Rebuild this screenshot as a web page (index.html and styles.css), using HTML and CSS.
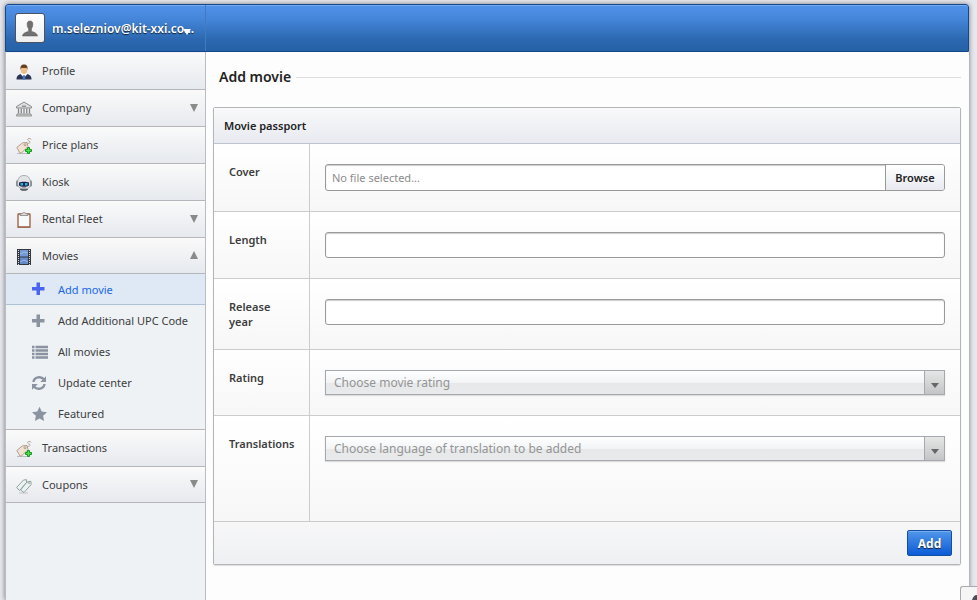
FILE: index.html
```html
<!DOCTYPE html>
<html lang="en">
<head>
<meta charset="utf-8">
<meta name="viewport" content="width=device-width, initial-scale=1">
<title>Add movie</title>
<link rel="stylesheet" href="styles.css">
</head>
<body>
<svg class="sprites" aria-hidden="true">
  <defs>
    <symbol id="tag" viewBox="0 0 16 16">
      <path d="M1 15.500h10" stroke="#b9bcc0" stroke-width="1"/>
      <path d="M10.500 5.500c4.500 0 4-2 2.500-2.500s-2-2.500 0-2.500 2 .5 2 1" fill="none" stroke="#b5a697" stroke-width="1"/>
      <path d="M.8 9.500L6.500 4.800l4.500-.3 1 4-6.500 6.500H4z" fill="#f1e2d3" stroke="#ab9683" stroke-width=".9"/>
      <circle cx="9" cy="6.800" r="1" fill="#fff" stroke="#8f7763" stroke-width=".7"/>
      <path d="M11.500 9.500h2v2h2v2h-2v2h-2v-2h-2v-2h2z" fill="#4fe04a" stroke="#129a20" stroke-width="1"/>
    </symbol>
    <symbol id="plus" viewBox="0 0 16 16">
      <path d="M4.500 1.500h3.500V6h4.500v3.500H8V14H4.500V9.500H0V6h4.500z" fill="currentColor"/>
    </symbol>
  </defs>
</svg>
<div class="shell">
  <header class="topbar">
    <button class="user" type="button">
      <span class="avatar">
        <svg width="18" height="18" viewBox="0 0 18 18"><path d="M9 2c2.300 0 3 1.400 2.800 3.800-.1 2-.8 3-1.400 4V12c.8 1.200 5.600 1.200 6.100 5h-15c.5-3.800 5.300-3.800 6.100-5V9.800c-.6-1-1.300-2-1.400-4C6 3.400 6.700 2 9 2z" fill="#707070" stroke="#555" stroke-width=".5"/></svg>
      </span>
      <span class="email">m.selezniov@kit-xxi.co...</span>
      <span class="caret"></span>
    </button>
  </header>
  <div class="columns">
    <nav class="sidebar">
      <a class="item" href="#">
        <svg class="icon" viewBox="0 0 16 16"><path d="M.5 15.500c0-4 2-5 5-5.500h5c3 .5 5 1.500 5 5.500z" fill="#2c3353"/><path d="M5 10.500L8 14l3-3.500L10 8H6z" fill="#fff"/><path d="M7.300 11h1.400l.8 4.500h-3z" fill="#3f77c4"/><ellipse cx="8" cy="6" rx="3.200" ry="4" fill="#f0bd8c"/><path d="M4.600 6C4 2 5.300.5 8 .5S12 2 11.400 6l-.8-2.300c-1.500.6-3.600.5-5.200 0z" fill="#67401f"/></svg>
        <span>Profile</span>
      </a>
      <a class="item" href="#">
        <svg class="icon" viewBox="0 0 16 16"><path d="M.5 5.500L8 1l7.500 4.500V7H.5z" fill="#ddd" stroke="#858585" stroke-width=".9"/><path d="M6 5.200h4" stroke="#777"/><path d="M2.500 7.500v5m2.750-5v5m5.500-5v5m2.750-5v5M8 7.500v5" stroke="#858585" stroke-width="1.300"/><path d="M1 13h14l.6 2H.4z" fill="#ccc" stroke="#858585" stroke-width=".8"/></svg>
        <span>Company</span><span class="mark down"></span>
      </a>
      <a class="item" href="#"><svg class="icon"><use href="#tag"/></svg><span>Price plans</span></a>
      <a class="item" href="#">
        <svg class="icon" viewBox="0 0 16 16"><ellipse cx="8" cy="14" rx="4" ry="1.800" fill="#4d5053"/><rect x=".2" y="5.500" width="2.200" height="6" rx="1" fill="#777"/><rect x="13.600" y="5.500" width="2.200" height="6" rx="1" fill="#777"/><path d="M1.500 8C1.500 3 4 .5 8 .5S14.500 3 14.500 8 12 14 8 14 1.500 12 1.500 8z" fill="#e1e3e6" stroke="#8d9196" stroke-width=".7"/><path d="M3 7.500c2-1 8-1 10 0v2.800c-1 2-9 2-10 0z" fill="#172944"/><path d="M4.500 8h2.500v2.500H4.500zm4.500 0h2.500v2.500H9z" fill="#2caee8"/><path d="M6 12.800h4" stroke="#888"/></svg>
        <span>Kiosk</span>
      </a>
      <a class="item" href="#">
        <svg class="icon" viewBox="0 0 16 16"><path d="M1 15.500h14" stroke="#aaa"/><rect x="2" y="2" width="12" height="13" rx=".5" fill="#f4fbfa" stroke="#9c5b3a" stroke-width="1.300"/><path d="M4 3.500V2l2-.2C6.500.2 9.500.2 10 1.800l2 .2v1.500z" fill="#ddd" stroke="#858585" stroke-width=".8"/></svg>
        <span>Rental Fleet</span><span class="mark down"></span>
      </a>
      <a class="item short" href="#">
        <svg class="icon" viewBox="0 0 16 16"><rect x="1" y="0" width="14" height="16" fill="#34383d"/><rect x="4" y="1" width="8" height="6.500" fill="#7499d9"/><rect x="4" y="8.500" width="8" height="6.500" fill="#6289cb"/><path d="M4 5l4-2 4 1M4 13l4-2 4 2" fill="none" stroke="#9db9e6"/><path d="M2.500 1v15M13.500 1v15" stroke="#ddd" stroke-width="1" stroke-dasharray="1 1"/></svg>
        <span>Movies</span><span class="mark up"></span>
      </a>
      <div class="submenu">
        <a class="subitem current" href="#"><svg class="icon"><use href="#plus"/></svg><span>Add movie</span></a>
        <a class="subitem" href="#"><svg class="icon"><use href="#plus"/></svg><span>Add Additional UPC Code</span></a>
        <a class="subitem" href="#"><svg class="icon" viewBox="0 0 16 16"><path d="M0 3h2.500M3.500 3H16M0 6.500h2.500M3.500 6.500H16M0 10h2.500M3.500 10H16M0 13.500h2.500M3.500 13.500H16" stroke="currentColor" stroke-width="2.500"/></svg><span>All movies</span></a>
        <a class="subitem" href="#"><svg class="icon" viewBox="0 0 16 16"><path d="M1.500 7c.5-5 7.500-6.500 10.500-2.500M12.500 9C12 14 5 15.500 2 11.500" fill="none" stroke="currentColor" stroke-width="2.400"/><path d="M14 1.200V7H8.200zM0 14.800V9h5.800z" fill="currentColor"/></svg><span>Update center</span></a>
        <a class="subitem" href="#"><svg class="icon" viewBox="0 0 16 16"><path d="M7.500.8l2.200 4.800 5.300.6-3.900 3.600 1 5.200-4.600-2.600L2.900 15l1-5.200L0 6.200l5.300-.6z" fill="currentColor"/></svg><span>Featured</span></a>
      </div>
      <a class="item" href="#"><svg class="icon"><use href="#tag"/></svg><span>Transactions</span></a>
      <a class="item short" href="#">
        <svg class="icon" viewBox="0 0 16 16"><path d="M3 15h9" stroke="#c2c5c8"/><path d="M.6 9.500L7.500 2l3-.3v3L3.500 12.500z" fill="#e9f3f2" stroke="#8a9696" stroke-width=".9"/><path d="M4.500 12L11 4l3.800-.8.4 3.300-7.200 8z" fill="#e9f3f2" stroke="#8a9696" stroke-width=".9"/><circle cx="13" cy="5" r=".7" fill="#667"/></svg>
        <span>Coupons</span><span class="mark down"></span>
      </a>
    </nav>
    <main class="content">
      <h1>Add movie</h1>
      <form class="panel">
        <h2>Movie passport</h2>
        <div class="row">
          <label for="cover">Cover</label>
          <div class="field"><div class="file"><span class="filename">No file selected...</span><span class="browse">Browse</span><input id="cover" type="file"></div></div>
        </div>
        <div class="row">
          <label for="length">Length</label>
          <div class="field"><input class="text" id="length" type="text"></div>
        </div>
        <div class="row">
          <label for="year">Release year</label>
          <div class="field"><input class="text" id="year" type="text"></div>
        </div>
        <div class="row">
          <label for="rating">Rating</label>
          <div class="field"><div class="choice"><select id="rating"><option>Choose movie rating</option></select></div></div>
        </div>
        <div class="row tall">
          <label for="translations">Translations</label>
          <div class="field"><div class="choice"><select id="translations"><option>Choose language of translation to be added</option></select></div></div>
        </div>
        <div class="actions"><button class="primary" type="submit">Add</button></div>
      </form>
    </main>
  </div>
</div>
<button class="corner" type="button" aria-label="Settings"><svg width="16" height="13" viewBox="0 0 16 13"><path d="M16 8c-3 0-4 2-5 5h5z" fill="#4b4e55"/></svg></button>
</body>
</html>
```
FILE: styles.css
```css
* { box-sizing: border-box; }
body {
  margin: 0;
  padding: 4px 8px 0 5px;
  background: #e7e8ee;
  color: #3d3d3d;
  font: 11px/15px "Noto Sans", "Open Sans", sans-serif;
}
a { color: inherit; text-decoration: none; }
button, input, select { font: inherit; }
.sprites { position: absolute; width: 0; height: 0; }
.shell {
  display: flex;
  flex-direction: column;
  min-height: calc(100vh - 4px);
  border-radius: 3px 3px 0 0;
  background: #fdfdfd;
  box-shadow: 0 0 5px rgba(0, 0, 0, .5);
}
.topbar {
  display: flex;
  height: 48px;
  border: 1px solid #15488b;
  border-radius: 3px 3px 0 0;
  background: linear-gradient(#5293ea, #4586da 30%, #2c68b0 75%, #2561a5);
  box-shadow: inset 0 1px #76aaf0;
}
.user {
  position: relative;
  display: flex;
  align-items: center;
  gap: 7px;
  width: 200px;
  padding: 0 9px;
  border: 0;
  border-right: 1px solid #4479bd;
  background: none;
  color: #fff;
  font-size: 12px;
  font-weight: 600;
  text-shadow: 0 1px 1px #123;
}
.avatar {
  display: grid;
  flex: none;
  place-items: center;
  width: 30px;
  height: 30px;
  border: 1px solid #4c5360;
  border-radius: 3px;
  background: linear-gradient(#fff, #eee);
}
.caret {
  position: absolute;
  right: 14px;
  top: 24px;
  border: 4px solid transparent;
  border-top: 6px solid #fff;
  border-bottom: 0;
}
.columns { display: flex; flex: 1; }
.sidebar {
  width: 201px;
  padding-top: 1px;
  border: 1px solid #b9bbc5;
  border-width: 0 1px;
  background: #eef2f5;
}
.item {
  display: flex;
  align-items: center;
  gap: 10px;
  height: 37px;
  padding: 0 7px 1px 10px;
  border-bottom: 1px solid #b5b6ba;
  background: linear-gradient(#fafafa, #e6e9ee);
}
.short { height: 36px; }
.item .icon { margin-top: 3px; }
.icon { flex: none; width: 16px; height: 16px; }
.mark { margin-left: auto; border: 4px solid transparent; }
.down { border-top: 8px solid #8a8a8a; border-bottom: 0; }
.up { border-bottom: 8px solid #8a8a8a; border-top: 0; }
.submenu { border-bottom: 1px solid #b5b6ba; }
.subitem {
  display: flex;
  align-items: center;
  gap: 10px;
  height: 31px;
  padding-left: 26px;
}
.subitem .icon { color: #8b93a0; }
.current { border-bottom: 1px solid #afc1d4; background: #dfe9f5; color: #1b67e5; }
.subitem.current .icon { color: #4a63f0; }
.content { flex: 1; min-width: 0; padding: 17px 8px 35px 7px; }
h1 {
  display: flex;
  align-items: center;
  gap: 5px;
  margin: 0 0 22px;
  padding-left: 6px;
  color: #222;
  font-size: 14px;
  font-weight: 600;
  line-height: 16px;
}
h1::after { content: ""; flex: 1; height: 1px; background: #ddd; }
.panel {
  border: 1px solid #b3b5b8;
  border-radius: 2px;
  box-shadow: 0 1px 1px #ddd;
}
h2 {
  height: 36px;
  margin: 0;
  padding: 0 10px;
  border-bottom: 1px solid #bcc5cf;
  background: linear-gradient(#f9f9fa, #e8eaf0);
  color: #222;
  font-size: 11px;
  font-weight: 600;
  line-height: 36px;
}
.row {
  display: grid;
  grid-template-columns: 96px 1fr;
  border-bottom: 1px solid #ccc;
  background: linear-gradient(#fff, #f7f7f7);
}
.row label { padding: 20px 15px; border-right: 1px solid #ccc; font-weight: 600; }
.field { min-width: 0; padding: 20px 15px; }
.tall { min-height: 106px; }
.text, .file {
  display: block;
  width: 100%;
  height: 26px;
  border: 1px solid #999;
  border-radius: 3px;
  background: #fff;
  box-shadow: inset 0 1px 1px #ccc;
}
.file { position: relative; display: flex; height: 27px; line-height: 25px; }
.file input { position: absolute; inset: 0; width: 100%; opacity: 0; }
.filename { flex: 1; padding-left: 6px; color: #8c8c8c; }
.browse {
  width: 59px;
  border-left: 1px solid #999;
  border-radius: 0 2px 2px 0;
  background: linear-gradient(#fff, #e8eaf0);
  color: #222;
  font-weight: 600;
  text-align: center;
}
.choice { position: relative; }
.choice select {
  display: block;
  appearance: none;
  width: 100%;
  height: 25px;
  padding: 0 30px 0 8px;
  border: 1px solid #a5a8ad;
  border-radius: 0;
  background: linear-gradient(#fff, #f2f4f6 50%, #e6e8ea 51%, #e8eaec);
  box-shadow: 0 1px 1px #ddd;
  color: #949494;
  font-size: 12px;
}
.choice::before {
  content: "";
  position: absolute;
  inset: 1px 1px 1px auto;
  width: 19px;
  border-left: 1px solid #a5a8ad;
  background: linear-gradient(#e6e6e6, #c3c4c6);
  pointer-events: none;
}
.choice::after {
  content: "";
  position: absolute;
  right: 6px;
  top: 13px;
  border: 4px solid transparent;
  border-top: 5px solid #666;
  border-bottom: 0;
  pointer-events: none;
}
.actions {
  display: flex;
  justify-content: flex-end;
  padding: 8px;
  background: linear-gradient(#f7f7f8, #eff0f3);
}
.primary {
  width: 45px;
  height: 26px;
  padding: 0;
  border: 1px solid #134ea2;
  border-radius: 2px;
  background: linear-gradient(#5196e9, #0b5bd7);
  box-shadow: inset 0 1px #75adf0;
  color: #fff;
  font-size: 12px;
  font-weight: 700;
  text-shadow: 0 1px 1px #123;
}
.corner {
  position: fixed;
  right: 0;
  bottom: 0;
  width: 17px;
  height: 14px;
  padding: 0;
  border: 1px solid #aaa;
  border-width: 1px 0 0 1px;
  border-radius: 3px 0 0;
  background: #f5f5f5;
}
.corner svg { display: block; }
```
